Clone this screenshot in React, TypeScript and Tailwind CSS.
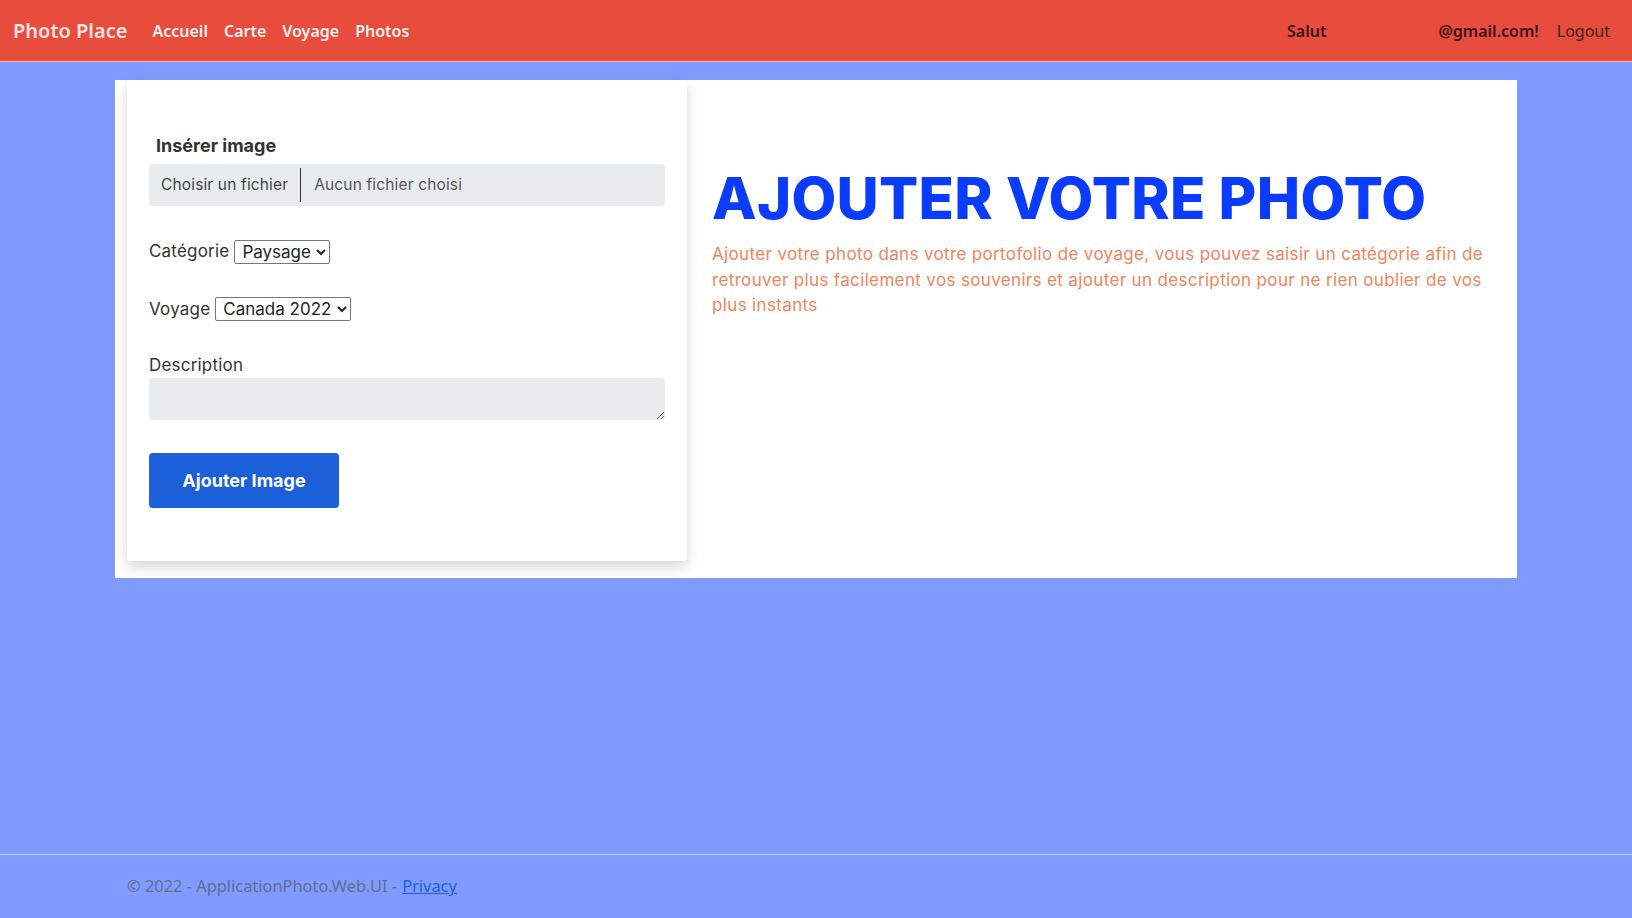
import React from 'react';

const navFont = { fontFamily: '"Noto Sans", "Open Sans", sans-serif' };

function Navbar() {
  return (
    <nav
      className="h-[62px] bg-[#e74c3c] border-b border-[#f4b8b0] flex items-center pl-[13px] pr-[22px]"
      style={navFont}
    >
      <span className="text-[20px] font-semibold text-[#fde4e0] mr-[25px]">Photo Place</span>
      <div className="flex items-center gap-[16px] text-[16px] font-semibold text-[#fff4f2]">
        <a>Accueil</a>
        <a>Carte</a>
        <a>Voyage</a>
        <a>Photos</a>
      </div>
      <div className="ml-auto flex items-center text-[16px] text-[#3b1414]">
        <span className="font-semibold">Salut</span>
        <span className="font-semibold ml-[112px]">@gmail.com!</span>
        <span className="ml-[18px] text-[#3f2121]">Logout</span>
      </div>
    </nav>
  );
}

function SelectRow({ label, value, mt }: { label: string; value: string; mt: string }) {
  return (
    <div className={`flex items-center ${mt}`}>
      <span className="text-[17px] tracking-[0.2px] text-[#333] mr-[5px]">{label}</span>
      <select
        defaultValue={value}
        className="h-[24px] border border-[#767676] rounded-[2px] bg-white text-[17px] text-[#222] pl-[3px] pr-[2px]"
      >
        <option>{value}</option>
      </select>
    </div>
  );
}

function UploadForm() {
  return (
    <div className="w-[560px] bg-white shadow-[0_6px_14px_rgba(0,0,0,0.16)] rounded-[3px] pt-[51px] pb-[53px] px-[22px]">
      <div className="h-[28px] flex items-center pl-[7px] text-[18px] font-bold text-[#333]">Insérer image</div>
      <div className="mt-[5px] h-[42px] bg-[#e9ecef] rounded-[4px] flex items-center text-[15.5px] tracking-[0.15px] text-[#444]">
        <span className="pl-[12px] pr-[12px] h-[34px] flex items-center border-r border-[#333]">Choisir un fichier</span>
        <span className="pl-[13px] text-[#555]">Aucun fichier choisi</span>
      </div>
      <SelectRow label="Catégorie" value="Paysage" mt="mt-[33px]" />
      <SelectRow label="Voyage" value="Canada 2022" mt="mt-[32px]" />
      <div className="mt-[32px] h-[24px] flex items-center text-[17px] tracking-[0.2px] text-[#333]">Description</div>
      <textarea className="block w-full h-[42px] bg-[#e9ecef] rounded-[4px] outline-none" />
      <button className="mt-[33px] w-[190px] h-[55px] bg-[#1b5fd9] rounded-[4px] text-white text-[18px] font-bold">
        Ajouter Image
      </button>
    </div>
  );
}

export default function App() {
  return (
    <div
      className="h-screen flex flex-col bg-[#809bff] overflow-hidden"
      style={{ fontFamily: 'Inter, "Noto Sans", sans-serif' }}
    >
      <Navbar />
      <main className="mt-[18px] w-[1402px] mx-auto bg-white flex pl-[12px] pb-[17px]">
        <UploadForm />
        <div className="ml-[25px] w-[790px] pt-[82px]">
          <h1 className="text-[58px] leading-[72px] font-extrabold text-[#0a3cff] tracking-[0.3px]">
            AJOUTER VOTRE PHOTO
          </h1>
          <p className="mt-[8px] text-[17px] leading-[25.5px] tracking-[0.35px] text-[#f0845c]">
            Ajouter votre photo dans votre portofolio de voyage, vous pouvez saisir un catégorie afin de retrouver plus
            facilement vos souvenirs et ajouter un description pour ne rien oublier de vos plus instants
          </p>
        </div>
      </main>
      <footer
        className="mt-auto h-[64px] border-t border-[#c3cdff] flex items-center pl-[127px] text-[16.4px] text-[#636e8f]"
        style={navFont}
      >
        <span>© 2022 - ApplicationPhoto.Web.UI - </span>
        <a className="ml-[5px] text-[#1a5cf0] underline">Privacy</a>
      </footer>
    </div>
  );
}
